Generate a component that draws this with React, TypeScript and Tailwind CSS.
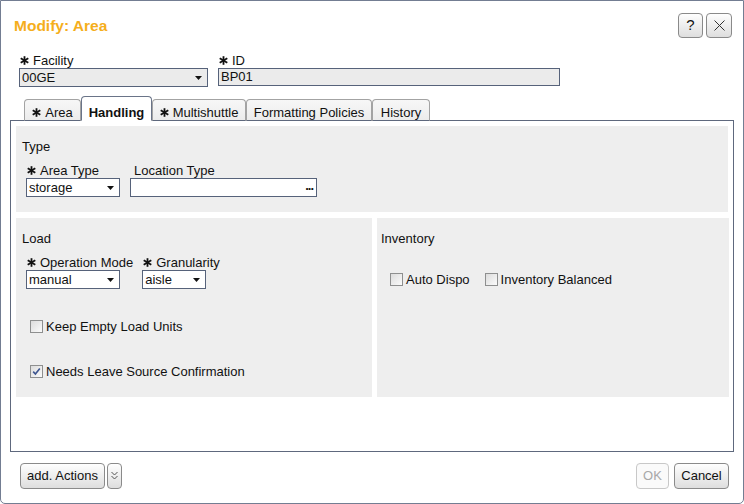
import React from "react";

const Star = () => (
  <svg width="9" height="9" viewBox="0 0 9 9" className="shrink-0">
    <g stroke="#111" strokeWidth="1.8">
      <line x1="4.5" y1="0.2" x2="4.5" y2="8.8" />
      <line x1="0.7" y1="2.3" x2="8.3" y2="6.7" />
      <line x1="0.7" y1="6.7" x2="8.3" y2="2.3" />
    </g>
  </svg>
);

const Arrow = () => (
  <svg width="7" height="4" viewBox="0 0 7 4" className="shrink-0">
    <polygon points="0,0 7,0 3.5,4" fill="#111" />
  </svg>
);

function Label({ text, required = true, className = "" }: { text: string; required?: boolean; className?: string }) {
  return (
    <div className={`flex items-center gap-[4px] h-[15px] leading-[15px] pl-[1px] whitespace-nowrap ${className}`}>
      {required && <Star />}
      <span>{text}</span>
    </div>
  );
}

function Select({ value, width, gray = false }: { value: string; width: string; gray?: boolean }) {
  return (
    <div
      className={`flex items-center justify-between h-[19px] border border-[#56627a] pl-[2px] pr-[5px] leading-[15px] ${width} ${
        gray ? "bg-[#ebebeb]" : "bg-white"
      }`}
    >
      <span>{value}</span>
      <Arrow />
    </div>
  );
}

function Checkbox({ label, checked = false }: { label: string; checked?: boolean }) {
  return (
    <div className="flex items-center gap-[3px] h-[15px] leading-[15px] whitespace-nowrap">
      <div className="w-[13px] h-[13px] border border-[#8e8f8f] bg-linear-to-br from-[#dcdcdc] to-[#fbfbfb] flex items-center justify-center">
        {checked && (
          <svg width="9" height="9" viewBox="0 0 9 9">
            <path d="M1.2 4.6 L3.4 7 L7.8 1.4" fill="none" stroke="#3d5590" strokeWidth="1.6" />
          </svg>
        )}
      </div>
      <span>{label}</span>
    </div>
  );
}

function Tab({ label, width, active = false, required = false }: { label: string; width: string; active?: boolean; required?: boolean }) {
  return (
    <div
      className={`flex items-end justify-center gap-[4px] rounded-t-[4px] border-x border-t leading-[15px] whitespace-nowrap ${width} ${
        active
          ? "h-[25px] border-[#6a7488] border-b border-b-white bg-white font-bold"
          : "h-[22px] border-[#a3a3a3] border-b border-b-[#5e687d] bg-linear-to-b from-[#f7f7f7] to-[#ececec]"
      }`}
    >
      {required && (
        <span className="mb-[3px]">
          <Star />
        </span>
      )}
      <span>{label}</span>
    </div>
  );
}

function Button({ children, disabled = false, className = "" }: { children: React.ReactNode; disabled?: boolean; className?: string }) {
  return (
    <div
      className={`flex items-center justify-center rounded-[4px] border ${
        disabled
          ? "border-[#c8c8c8] text-[#a8a8a8] bg-[#fafafa]"
          : "border-[#8a8a8a] text-[#111] bg-linear-to-b from-[#fefefe] to-[#dedede]"
      } ${className}`}
    >
      {children}
    </div>
  );
}

export default function App() {
  return (
    <div className="w-[744px] h-[504px] bg-white border border-[#737d92] rounded-b-[5px] flex flex-col text-[13px] text-[#111] font-['Liberation_Sans',Arial,sans-serif]">
      {/* Header */}
      <div className="flex justify-between items-start pt-[12px] pl-[13px] pr-[11px]">
        <h1 className="mt-[4px] text-[15.5px] leading-[18px] font-bold text-[#f5ae1c]">Modify: Area</h1>
        <div className="flex gap-[3px]">
          <Button className="w-[25px] h-[25px] text-[15px]">?</Button>
          <Button className="w-[26px] h-[25px]">
            <svg width="11" height="11" viewBox="0 0 11 11">
              <path d="M0.5 0.5 L10.5 10.5 M10.5 0.5 L0.5 10.5" stroke="#333" strokeWidth="1" />
            </svg>
          </Button>
        </div>
      </div>

      {/* Fields */}
      <div className="flex gap-[10px] mt-[15px] pl-[18px]">
        <div className="flex flex-col">
          <Label text="Facility" />
          <Select value="00GE" width="w-[189px]" gray />
        </div>
        <div className="flex flex-col">
          <Label text="ID" />
          <div className="h-[18px] w-[342px] border border-[#56627a] bg-[#ebebeb] pl-[2px] leading-[16px]">BP01</div>
        </div>
      </div>

      {/* Tabs + panel */}
      <div className="mx-[9px] mt-[9px] flex flex-col">
        <div className="relative z-10 flex items-end h-[25px] -mb-px pl-[14px]">
          <Tab label="Area" width="w-[57px]" required />
          <Tab label="Handling" width="w-[71px]" active />
          <Tab label="Multishuttle" width="w-[94px]" required />
          <Tab label="Formatting Policies" width="w-[126px]" />
          <Tab label="History" width="w-[58px]" />
        </div>
        <div className="h-[332px] border border-[#5e687d] p-[5px] flex flex-col gap-[6px]">
          {/* Type */}
          <div className="h-[86px] bg-[#eeeeee] pt-[13px]">
            <div className="pl-[6px] leading-[15px] mb-[9px]">Type</div>
            <div className="flex gap-[10px] pl-[10px]">
              <div className="flex flex-col">
                <Label text="Area Type" />
                <Select value="storage" width="w-[94px]" />
              </div>
              <div className="flex flex-col">
                <Label text="Location Type" required={false} className="pl-[4px]" />
                <div className="flex items-center justify-end h-[19px] w-[187px] border border-[#56627a] bg-white pr-[3px]">
                  <span className="font-bold text-[13px] leading-[13px] tracking-[-1px] -mt-[4px]">...</span>
                </div>
              </div>
            </div>
          </div>

          {/* Load + Inventory */}
          <div className="grid grid-cols-[356px_352px] gap-[5px]">
            <div className="h-[179px] bg-[#eeeeee] pt-[13px]">
              <div className="pl-[6px] leading-[15px] mb-[9px]">Load</div>
              <div className="flex gap-[9px] pl-[10px]">
                <div className="flex flex-col">
                  <Label text="Operation Mode" />
                  <Select value="manual" width="w-[94px]" />
                </div>
                <div className="flex flex-col">
                  <Label text="Granularity" />
                  <Select value="aisle" width="w-[64px]" />
                </div>
              </div>
              <div className="pl-[14px] mt-[30px]">
                <Checkbox label="Keep Empty Load Units" />
              </div>
              <div className="pl-[14px] mt-[30px]">
                <Checkbox label="Needs Leave Source Confirmation" checked />
              </div>
            </div>
            <div className="h-[179px] bg-[#eeeeee] pt-[13px]">
              <div className="pl-[4px] leading-[15px]">Inventory</div>
              <div className="flex gap-[15px] pl-[13px] mt-[26px]">
                <Checkbox label="Auto Dispo" />
                <Checkbox label="Inventory Balanced" />
              </div>
            </div>
          </div>
        </div>
      </div>

      {/* Footer */}
      <div className="flex justify-between items-center mt-[11px] pl-[19px] pr-[14px]">
        <div className="flex gap-[2px]">
          <Button className="w-[85px] h-[26px]">add. Actions</Button>
          <Button className="w-[15px] h-[26px]">
            <svg width="7" height="10" viewBox="0 0 7 10">
              <path d="M0.5 1 L3.5 4 L6.5 1 M0.5 5 L3.5 8 L6.5 5" fill="none" stroke="#555" strokeWidth="1" />
            </svg>
          </Button>
        </div>
        <div className="flex gap-[5px]">
          <Button disabled className="w-[33px] h-[26px]">OK</Button>
          <Button className="w-[55px] h-[26px]">Cancel</Button>
        </div>
      </div>
    </div>
  );
}
